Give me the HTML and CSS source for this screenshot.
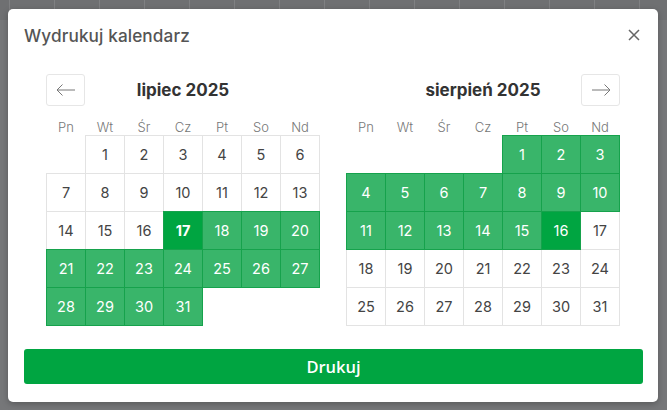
FILE: index.html
```html
<!DOCTYPE html>
<html lang="pl">
<head>
  <meta charset="UTF-8">
  <title>Wydrukuj kalendarz</title>
  <link rel="stylesheet" href="styles.css">
</head>
<body>
  <div class="modal">
    <div class="modal-header">
      <h2>Wydrukuj kalendarz</h2>
      <button class="close-btn" aria-label="Zamknij">
        <svg width="12" height="12" viewBox="0 0 12 12"><path d="M1 1L11 11M11 1L1 11" stroke="#666" stroke-width="1.5" fill="none"/></svg>
      </button>
    </div>
    <div class="months">
      <div class="month">
        <div class="month-head">
          <button class="nav-btn" aria-label="Poprzedni">
            <svg width="20" height="12" viewBox="0 0 20 12"><path d="M1 6H19M6.5 0.5L1 6L6.5 11.5" stroke="#777" stroke-width="1" fill="none"/></svg>
          </button>
          <div class="month-title">lipiec 2025</div>
          <span></span>
        </div>
        <table class="cal" id="cal-lipiec">
          <thead><tr><th>Pn</th><th>Wt</th><th>Śr</th><th>Cz</th><th>Pt</th><th>So</th><th>Nd</th></tr></thead>
          <tbody></tbody>
        </table>
      </div>
      <div class="month">
        <div class="month-head">
          <span></span>
          <div class="month-title">sierpień 2025</div>
          <button class="nav-btn" aria-label="Następny">
            <svg width="20" height="12" viewBox="0 0 20 12"><path d="M1 6H19M13.5 0.5L19 6L13.5 11.5" stroke="#777" stroke-width="1" fill="none"/></svg>
          </button>
        </div>
        <table class="cal" id="cal-sierpien">
          <thead><tr><th>Pn</th><th>Wt</th><th>Śr</th><th>Cz</th><th>Pt</th><th>So</th><th>Nd</th></tr></thead>
          <tbody></tbody>
        </table>
      </div>
    </div>
    <button class="print-btn">Drukuj</button>
  </div>
  <script>
    // zakres: 17.07.2025 - 16.08.2025
    function buduj(id, offset, dni, czyZaznaczony, koniec) {
      const tbody = document.getElementById(id).querySelector('tbody');
      let tr = document.createElement('tr');
      for (let i = 0; i < offset; i++) tr.appendChild(document.createElement('td'));
      for (let d = 1; d <= dni; d++) {
        const td = document.createElement('td');
        td.className = 'day';
        td.innerText = d;
        if (czyZaznaczony(d)) td.classList.add('in-range');
        if (koniec(d)) td.classList.add('edge');
        if (id === 'cal-lipiec' && d === 17) td.classList.add('start');
        tr.appendChild(td);
        if (tr.children.length === 7) {
          tbody.appendChild(tr);
          tr = document.createElement('tr');
        }
      }
      if (tr.children.length) {
        while (tr.children.length < 7) tr.appendChild(document.createElement('td'));
        tbody.appendChild(tr);
      }
    }
    buduj('cal-lipiec', 1, 31, d => d >= 17, d => d === 17);
    buduj('cal-sierpien', 4, 31, d => d <= 16, d => d === 16);
  </script>
</body>
</html>
```

FILE: styles.css
```css
body {
  margin: 0;
  height: 410px;
  font-family: Inter, "Noto Sans", sans-serif;
  background:
    linear-gradient(90deg, transparent 44px, #808183 44px) 10px 0 / 45px 20px repeat-x,
    linear-gradient(#6f7072, #6f7072) 0 0 / 100% 20px no-repeat,
    #767779;
  overflow: hidden;
}
.modal { margin: 9px 9px 0 8px; height: 393px; box-sizing: border-box; background: #fff; border-radius: 5px; padding: 16px 15px 0 16px; box-shadow: 0 2px 6px rgba(0,0,0,.25); }
.modal-header { display: flex; justify-content: space-between; align-items: center; height: 20px; }
.modal-header h2 { margin: 0; font-size: 17.2px; font-weight: 500; color: #555; letter-spacing: 0.1px; }
.close-btn { border: none; background: none; padding: 0; width: 14px; height: 14px; display: flex; align-items: center; justify-content: center; margin-right: 2px; }
.months { display: flex; justify-content: space-between; padding: 0 23px 0 22px; margin-top: 29px; }
.month-head { display: grid; grid-template-columns: 39px 1fr 39px; align-items: center; height: 32px; }
.month-title { text-align: center; font-weight: 700; font-size: 17px; color: #333; }
.nav-btn { width: 39px; height: 32px; box-sizing: border-box; border: 1px solid #e6e6e6; border-radius: 3px; background: #fff; padding: 0; display: flex; align-items: center; justify-content: center; }
.cal { border-collapse: collapse; table-layout: fixed; width: 274px; }
.cal th { height: 29px; padding: 0; vertical-align: bottom; box-sizing: border-box; font-size: 13px; font-weight: 300; color: #777; line-height: 16px; }
.cal td { width: 38px; height: 37px; padding: 0; text-align: center; font-size: 14.5px; color: #444; border: none; }
.cal td.day { border: 1px solid #e3e3e3; }
.cal td.in-range { background: #39b56a; color: #fff; border: 1px double #16a24c; }
.cal td.edge { background: #00a541; }
.cal td.start { font-weight: 700; }
.print-btn { display: block; width: 100%; margin-top: 23px; height: 35px; border: none; border-radius: 3px; background: #00a541; color: #fff; font-family: "Open Sans", sans-serif; font-weight: 600; font-size: 16.5px; }
```
